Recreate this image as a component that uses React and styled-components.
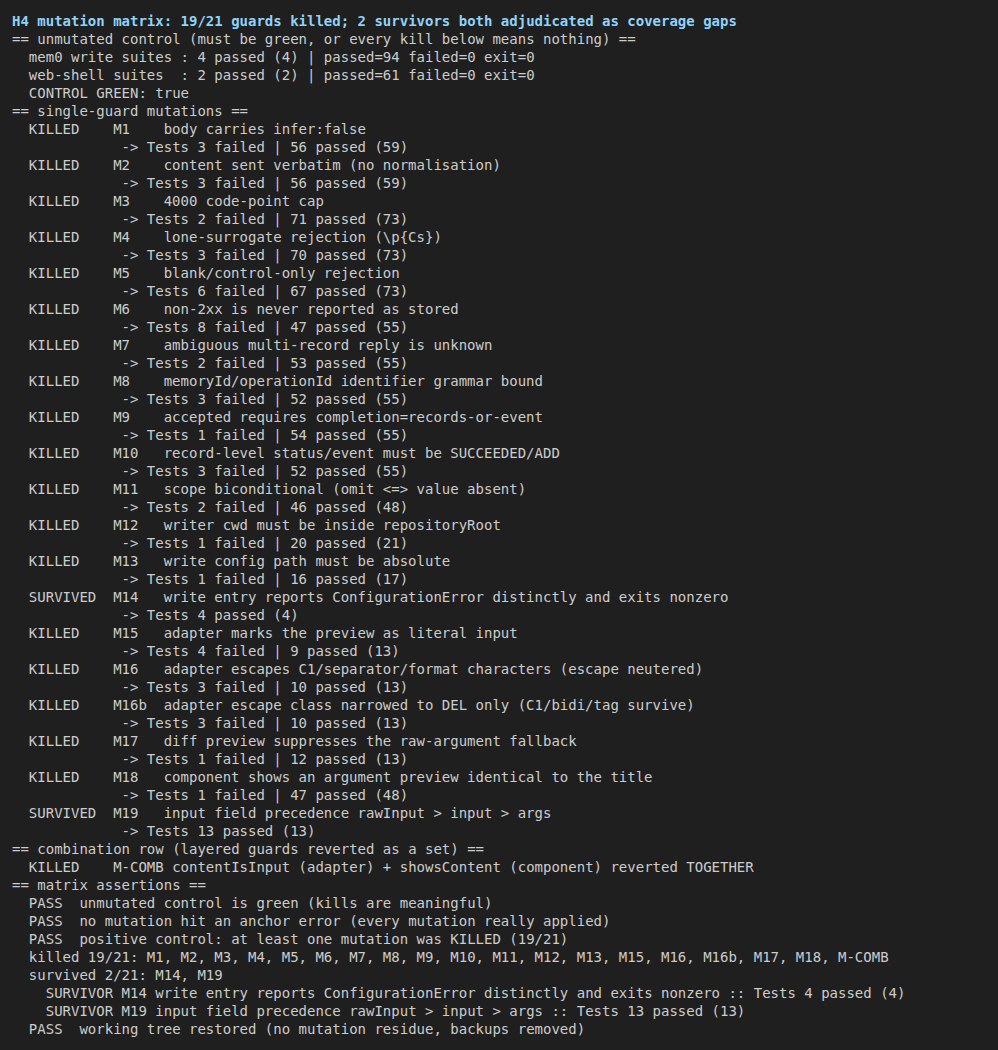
import React from "react";
import styled, { createGlobalStyle } from "styled-components";

const Global = createGlobalStyle`
  html, body { margin: 0; padding: 0; background: #1f1f1f; }
  body { min-height: 1050px; }
`;

const Terminal = styled.div`
  box-sizing: border-box;
  min-height: 1050px;
  padding: 12px 12px 0 12px;
  background: #1f1f1f;
  color: #cccccc;
  font-family: "DejaVu Sans Mono", "Liberation Mono", monospace;
  font-size: 14px;
  line-height: 18px;
  white-space: pre;
`;

const Title = styled.div`
  color: #8fd3f7;
  font-weight: bold;
`;

const Section = styled.div``;

const Line = styled.div`
  padding-left: ${(p) => p.$indent || 0}ch;
`;

const MutationRow = styled.div`
  display: grid;
  grid-template-columns: 10ch 6ch 1fr;
  padding-left: 2ch;
`;

const Status = styled.span``;
const Id = styled.span``;
const Desc = styled.span``;

const Result = styled.div`
  padding-left: 13ch;
`;

const mutations = [
  ["KILLED", "M1", "body carries infer:false", "Tests 3 failed | 56 passed (59)"],
  ["KILLED", "M2", "content sent verbatim (no normalisation)", "Tests 3 failed | 56 passed (59)"],
  ["KILLED", "M3", "4000 code-point cap", "Tests 2 failed | 71 passed (73)"],
  ["KILLED", "M4", "lone-surrogate rejection (\\p{Cs})", "Tests 3 failed | 70 passed (73)"],
  ["KILLED", "M5", "blank/control-only rejection", "Tests 6 failed | 67 passed (73)"],
  ["KILLED", "M6", "non-2xx is never reported as stored", "Tests 8 failed | 47 passed (55)"],
  ["KILLED", "M7", "ambiguous multi-record reply is unknown", "Tests 2 failed | 53 passed (55)"],
  ["KILLED", "M8", "memoryId/operationId identifier grammar bound", "Tests 3 failed | 52 passed (55)"],
  ["KILLED", "M9", "accepted requires completion=records-or-event", "Tests 1 failed | 54 passed (55)"],
  ["KILLED", "M10", "record-level status/event must be SUCCEEDED/ADD", "Tests 3 failed | 52 passed (55)"],
  ["KILLED", "M11", "scope biconditional (omit <=> value absent)", "Tests 2 failed | 46 passed (48)"],
  ["KILLED", "M12", "writer cwd must be inside repositoryRoot", "Tests 1 failed | 20 passed (21)"],
  ["KILLED", "M13", "write config path must be absolute", "Tests 1 failed | 16 passed (17)"],
  ["SURVIVED", "M14", "write entry reports ConfigurationError distinctly and exits nonzero", "Tests 4 passed (4)"],
  ["KILLED", "M15", "adapter marks the preview as literal input", "Tests 4 failed | 9 passed (13)"],
  ["KILLED", "M16", "adapter escapes C1/separator/format characters (escape neutered)", "Tests 3 failed | 10 passed (13)"],
  ["KILLED", "M16b", "adapter escape class narrowed to DEL only (C1/bidi/tag survive)", "Tests 3 failed | 10 passed (13)"],
  ["KILLED", "M17", "diff preview suppresses the raw-argument fallback", "Tests 1 failed | 12 passed (13)"],
  ["KILLED", "M18", "component shows an argument preview identical to the title", "Tests 1 failed | 47 passed (48)"],
  ["SURVIVED", "M19", "input field precedence rawInput > input > args", "Tests 13 passed (13)"],
];

export default function App() {
  return (
    <>
      <Global />
      <Terminal>
        <Title>H4 mutation matrix: 19/21 guards killed; 2 survivors both adjudicated as coverage gaps</Title>
        <Section>
          <Line>== unmutated control (must be green, or every kill below means nothing) ==</Line>
          <Line $indent={2}>mem0 write suites : 4 passed (4) | passed=94 failed=0 exit=0</Line>
          <Line $indent={2}>web-shell suites  : 2 passed (2) | passed=61 failed=0 exit=0</Line>
          <Line $indent={2}>CONTROL GREEN: true</Line>
        </Section>
        <Section>
          <Line>== single-guard mutations ==</Line>
          {mutations.map(([status, id, desc, result]) => (
            <React.Fragment key={id}>
              <MutationRow>
                <Status>{status}</Status>
                <Id>{id}</Id>
                <Desc>{desc}</Desc>
              </MutationRow>
              <Result>{"-> " + result}</Result>
            </React.Fragment>
          ))}
        </Section>
        <Section>
          <Line>== combination row (layered guards reverted as a set) ==</Line>
          <Line $indent={2}>KILLED    M-COMB contentIsInput (adapter) + showsContent (component) reverted TOGETHER</Line>
        </Section>
        <Section>
          <Line>== matrix assertions ==</Line>
          <Line $indent={2}>PASS  unmutated control is green (kills are meaningful)</Line>
          <Line $indent={2}>PASS  no mutation hit an anchor error (every mutation really applied)</Line>
          <Line $indent={2}>PASS  positive control: at least one mutation was KILLED (19/21)</Line>
          <Line $indent={2}>killed 19/21: M1, M2, M3, M4, M5, M6, M7, M8, M9, M10, M11, M12, M13, M15, M16, M16b, M17, M18, M-COMB</Line>
          <Line $indent={2}>survived 2/21: M14, M19</Line>
          <Line $indent={4}>SURVIVOR M14 write entry reports ConfigurationError distinctly and exits nonzero :: Tests 4 passed (4)</Line>
          <Line $indent={4}>SURVIVOR M19 input field precedence rawInput &gt; input &gt; args :: Tests 13 passed (13)</Line>
          <Line $indent={2}>PASS  working tree restored (no mutation residue, backups removed)</Line>
        </Section>
      </Terminal>
    </>
  );
}
